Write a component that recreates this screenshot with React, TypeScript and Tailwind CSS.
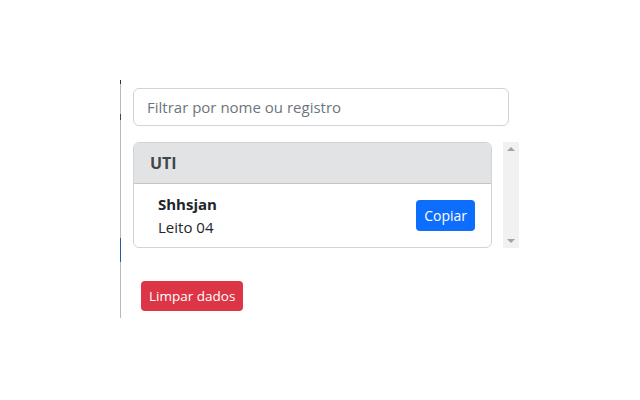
const font = { fontFamily: '"Open Sans", "Noto Sans", "Liberation Sans", sans-serif' };

const App = () => {
    return (
        <div className="w-[640px] h-[400px] bg-white pt-[80px] pl-[120px]" style={font}>
            <div className="w-[400px] h-[238px] border-l border-[#b9b9b9] relative">
                {/* left edge marks */}
                <div className="absolute -left-px top-0 w-px h-[4px] bg-[#333]" />
                <div className="absolute -left-px top-[34px] w-px h-[6px] bg-[#444]" />
                <div className="absolute -left-px top-[158px] w-px h-[24px] bg-[#2a5a9a]" />

                <div className="pl-[12px] pt-[8px] flex flex-col">
                    <input
                        placeholder="Filtrar por nome ou registro"
                        className="w-[376px] h-[38px] px-[13px] border border-[#ced4da] rounded-[6px] text-[15px] text-[#212529] placeholder:text-[#6c757d] outline-none"
                    />

                    <div className="mt-[16px] flex gap-[11px]">
                        {/* Card */}
                        <div className="w-[359px] h-[106px] border border-[#d3d3d3] rounded-[6px] overflow-hidden flex flex-col">
                            <div className="h-[41px] bg-[#e2e3e5] border-b border-[#c4c5c7] flex items-center px-[16px]">
                                <h2 className="text-[16px] font-bold text-[#41464b]">UTI</h2>
                            </div>
                            <div className="flex-1 flex items-center pl-[24px] pr-[16px]">
                                <div className="flex flex-col leading-[23px]">
                                    <span className="text-[15px] font-bold text-[#212529]">Shhsjan</span>
                                    <span className="text-[15px] text-[#212529]">Leito 04</span>
                                </div>
                                <button className="ml-auto h-[31px] px-[8px] bg-[#0d6efd] text-white text-[14px] rounded-[4px]">
                                    Copiar
                                </button>
                            </div>
                        </div>

                        {/* Scrollbar */}
                        <div className="w-[16px] h-[106px] bg-[#f1f1f1] flex flex-col items-center justify-between py-[5px]">
                            <div className="w-0 h-0 border-l-[4px] border-r-[4px] border-b-[4px] border-l-transparent border-r-transparent border-b-[#a3a3a3]" />
                            <div className="w-0 h-0 border-l-[4px] border-r-[4px] border-t-[4px] border-l-transparent border-r-transparent border-t-[#a3a3a3]" />
                        </div>
                    </div>

                    <div className="mt-[33px] pl-[8px]">
                        <button className="h-[30px] px-[8px] bg-[#dc3545] text-white text-[13.5px] rounded-[4px]">
                            Limpar dados
                        </button>
                    </div>
                </div>
            </div>
        </div>
    );
};

export default App;
